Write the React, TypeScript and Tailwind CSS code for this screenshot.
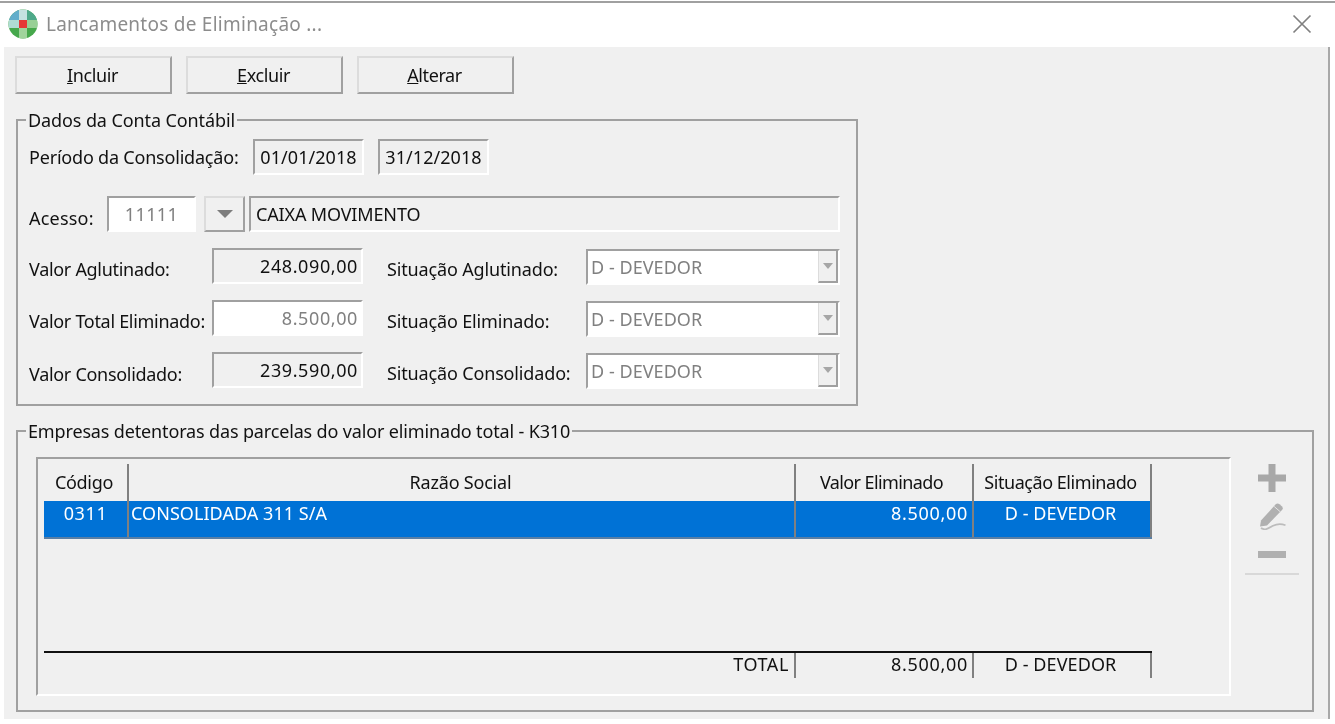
import React from "react";

const font = "font-['Noto_Sans','Open_Sans',sans-serif]";
const sunken = "border-t-2 border-l-2 border-r-2 border-b-2 border-t-[#a0a0a0] border-l-[#a0a0a0] border-r-white border-b-white";

function Btn({ u, rest }: { u: string; rest: string }) {
  return (
    <button className="w-[157px] h-[38px] pr-[2px] bg-[#f0f0f0] border-t-2 border-l-2 border-r-2 border-b-2 border-t-[#dcdcdc] border-l-[#dcdcdc] border-r-[#a0a0a0] border-b-[#a0a0a0] text-[18px] text-[#111111] tracking-[-0.4px]">
      <u>{u}</u>
      {rest}
    </button>
  );
}

function Field({ w, value, align = "right", white = false, grey = false, track = "tracking-[0.6px]" }: { w: string; value: string; align?: string; white?: boolean; grey?: boolean; track?: string }) {
  return (
    <div
      className={`${w} h-[36px] ${sunken} ${white ? "bg-white" : "bg-[#f0f0f0]"} ${grey ? "text-[#808080]" : "text-[#111111]"} flex items-center px-[3px] text-[18px] ${track} ${
        align === "right" ? "justify-end" : align === "center" ? "justify-center" : "justify-start"
      }`}
    >
      {value}
    </div>
  );
}

function Combo() {
  return (
    <div className={`w-[254px] h-[36px] mt-px ${sunken} bg-white flex items-center justify-between pl-[3px] text-[18px] text-[#808080]`}>
      <span className="tracking-[0.05px]">D - DEVEDOR</span>
      <div className="w-[20px] h-[32px] bg-[#f0f0f0] border-l border-l-[#dcdcdc] border-r-2 border-b-2 border-r-[#a0a0a0] border-b-[#a0a0a0] flex items-center justify-center">
        <svg width="10" height="6" viewBox="0 0 10 6"><path d="M0 0h10L5 6z" fill="#a6a6a6" /></svg>
      </div>
    </div>
  );
}

function ValueRow({ label, value, white, situ, pad }: { label: string; value: string; white?: boolean; situ: string; pad: string }) {
  return (
    <div className="flex items-start h-[36px]">
      <span className={`w-[183px] ${pad} text-[18px] leading-[24px] tracking-[-0.3px]`}>{label}</span>
      <Field w="w-[151px]" value={value} white={white} grey={white} />
      <span className="w-[199px] ml-[24px] pt-[9px] text-[18px] leading-[24px] tracking-[-0.15px]">{situ}</span>
      <Combo />
    </div>
  );
}

function Logo() {
  return (
    <svg width="30" height="30" viewBox="0 0 30 30">
      <defs>
        <clipPath id="lg"><circle cx="15" cy="15" r="14.5" /></clipPath>
      </defs>
      <g clipPath="url(#lg)">
        <rect width="30" height="30" fill="#46a84c" />
        <rect x="19" y="0" width="11" height="11" fill="#4ea98a" />
        <rect x="11" y="0" width="8" height="30" fill="#a0d49c" />
        <rect x="0" y="11" width="30" height="8" fill="#98d096" />
        <rect x="0" y="0" width="11" height="11" fill="#62aecb" />
        <rect x="11" y="0" width="8" height="11" fill="#c4e2e0" />
        <rect x="0" y="11" width="11" height="8" fill="#b0dcd4" />
        <rect x="11" y="11" width="8" height="8" fill="#e53935" />
      </g>
    </svg>
  );
}

export default function App() {
  const cell = "flex items-center border-r-2 border-r-[#808080]";
  const top = "flex items-start border-r-2 border-r-[#808080] leading-[24px]";
  const foot = "flex items-start border-r-2 border-r-[#808080] leading-[22px]";
  const cols = "w-[1108px] grid grid-cols-[85px_667px_178px_178px]";
  return (
    <div className={`${font} w-[1335px] h-[724px] bg-white overflow-hidden text-[#111111] blur-[0.45px]`}>
      <div className="h-[46px] border-t-2 border-t-[#a0a0a0] mt-px flex items-center pl-[8px] pr-[23px] pb-[2px]">
        <Logo />
        <span className="ml-[8px] text-[19px] text-[#8c8c8c] flex-1 tracking-[0.25px]">Lancamentos de Eliminação ...</span>
        <svg width="20" height="20" viewBox="0 0 20 20"><path d="M1.5 1.5l17 17M18.5 1.5l-17 17" stroke="#808080" strokeWidth="1.7" fill="none" /></svg>
      </div>

      <div className="ml-[4px] w-[1326px] h-[672px] bg-[#f0f0f0] border-r-2 border-r-[#a8a8a8] pt-[9px] pl-[11px]">
        <div className="flex gap-[14px]">
          <Btn u="I" rest="ncluir" />
          <Btn u="E" rest="xcluir" />
          <Btn u="A" rest="lterar" />
        </div>

        <fieldset className="ml-px mt-[14px] w-[842px] h-[298px] border-2 border-[#a0a0a0] pl-[11px]">
          <legend className="ml-[-3px] px-[2px] text-[18px] leading-[24px] tracking-[-0.1px]">Dados da Conta Contábil</legend>
          <div className="mt-[7px] flex items-center h-[36px]">
            <span className="w-[224px] text-[18px] tracking-[-0.2px]">Período da Consolidação:</span>
            <Field w="w-[111px]" value="01/01/2018" align="center" track="tracking-[0.05px]" />
            <div className="w-[14px]" />
            <Field w="w-[111px]" value="31/12/2018" align="center" track="tracking-[0.05px]" />
          </div>
          <div className="mt-[21px] flex items-start h-[36px]">
            <span className="w-[78px] pt-[10px] text-[18px] leading-[24px] tracking-[0.2px]">Acesso:</span>
            <Field w="w-[89px]" value="11111" align="center" white grey track="tracking-[0.4px]" />
            <div className="ml-[8px] w-[41px] h-[36px] border-t-2 border-l-2 border-r-2 border-b-2 border-t-[#dcdcdc] border-l-[#dcdcdc] border-r-[#a0a0a0] border-b-[#a0a0a0] flex items-center justify-center">
              <svg width="16" height="8" viewBox="0 0 16 8"><path d="M0 0h16L8 8z" fill="#7d7d7d" /></svg>
            </div>
            <div className="ml-[4px]">
              <Field w="w-[591px]" value="CAIXA MOVIMENTO" align="left" track="tracking-[-0.15px] pl-[5px]" />
            </div>
          </div>
          <div className="mt-[16px] flex flex-col gap-[16px]">
            <ValueRow pad="pt-[9px]" label="Valor Aglutinado:" value="248.090,00" situ="Situação Aglutinado:" />
            <ValueRow pad="pt-[9px]" label="Valor Total Eliminado:" value="8.500,00" white situ="Situação Eliminado:" />
            <ValueRow pad="pt-[10px]" label="Valor Consolidado:" value="239.590,00" situ="Situação Consolidado:" />
          </div>
        </fieldset>

        <fieldset className="ml-px mt-[13px] w-[1298px] h-[293px] border-2 border-[#a0a0a0] flex">
          <legend className="ml-[8px] px-[2px] text-[18px] leading-[24px] tracking-[-0.15px]">Empresas detentoras das parcelas do valor eliminado total - K310</legend>
          <div className="flex mt-[14px] ml-[18px]">
            <div className={`w-[1195px] h-[239px] ${sunken} pl-[6px] pt-[5px] pb-[16px] flex flex-col`}>
              <div className={`${cols} h-[37px] text-[18px]`}>
                <div className={`${cell} justify-center pr-[3px] tracking-[-0.3px]`}>Código</div>
                <div className={`${cell} justify-center pr-[2px] tracking-[-0.2px]`}>Razão Social</div>
                <div className={`${cell} justify-center pr-[5px] tracking-[-0.6px]`}>Valor Eliminado</div>
                <div className={`${cell} justify-center pr-[3px] tracking-[-0.45px]`}>Situação Eliminado</div>
              </div>
              <div className={`${cols} h-[38px] bg-[#0072d6] text-white text-[18px] border-b-2 border-b-[#5a7fa5]`}>
                <div className={`${top} justify-center tracking-[0.6px]`}>0311</div>
                <div className={`${top} pl-[2px] tracking-[0.05px]`}>CONSOLIDADA 311 S/A</div>
                <div className={`${top} justify-end pr-[4px] tracking-[0.7px]`}>8.500,00</div>
                <div className={`${top} justify-center pr-[3px] tracking-[0.1px]`}>D - DEVEDOR</div>
              </div>
              <div className={`mt-auto ${cols} h-[27px] border-t-2 border-t-[#111111] text-[18px]`}>
                <div />
                <div className={`${foot} justify-end pr-[5px] tracking-[0.6px]`}>TOTAL</div>
                <div className={`${foot} justify-end pr-[4px] tracking-[0.7px]`}>8.500,00</div>
                <div className={`${foot} justify-center pr-[3px] tracking-[0.1px]`}>D - DEVEDOR</div>
              </div>
            </div>
            <div className="ml-[14px] w-[54px] flex flex-col items-center pt-[7px]">
              <svg width="28" height="28" viewBox="0 0 28 28"><path d="M10.5 0h7v10.5H28v7H17.5V28h-7V17.5H0v-7h10.5z" fill="#a8a8a8" /></svg>
              <svg className="mt-[10px]" width="28" height="28" viewBox="0 0 28 28">
                <path d="M2 24.5L3 18.5L17.5 2.5Q19.5 .5 21.5 2.2L23.8 4.2Q25.6 6 24 8L9 23.5Z" fill="#b0b0b0" />
                <path d="M16.2 4.5L22.5 10" stroke="#e4e4e4" strokeWidth="1" fill="none" />
                <path d="M3 26C7 29 11 26 15 23.8C19 21.8 23 21.6 27.5 23.2" stroke="#bcbcbc" strokeWidth="1.7" fill="none" />
              </svg>
              <div className="mt-[21px] w-[28px] h-[7px] bg-[#b0b0b0]" />
              <div className="mt-[15px] w-[54px] h-[2px] bg-[#d8d8d8]" />
            </div>
          </div>
        </fieldset>
      </div>
    </div>
  );
}
